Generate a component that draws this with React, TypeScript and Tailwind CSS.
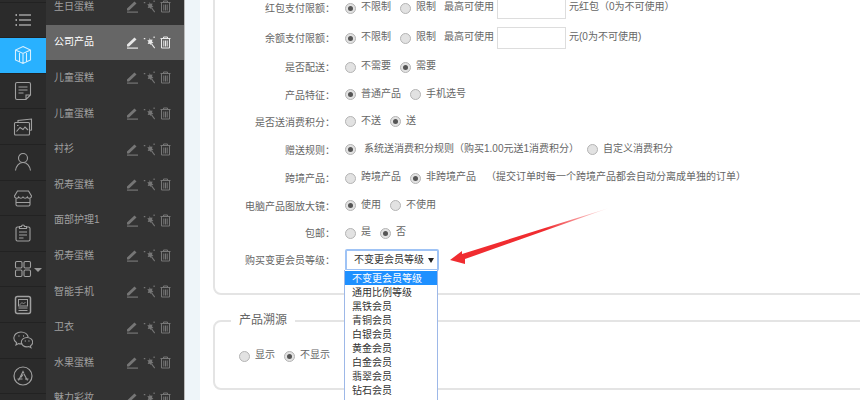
import React from "react";

const products = [
  "生日蛋糕",
  "公司产品",
  "儿童蛋糕",
  "儿童蛋糕",
  "衬衫",
  "祝寿蛋糕",
  "面部护理1",
  "祝寿蛋糕",
  "智能手机",
  "卫衣",
  "水果蛋糕",
  "魅力彩妆",
];

const railIcons: React.ReactNode[] = [
  <>
    <path d="M6 5h12M6 10h12M6 15h12" strokeWidth="1.5" />
    <path d="M2.5 5h1.5M2.5 10h1.5M2.5 15h1.5" strokeWidth="2" />
  </>,
  <path d="M10 1.5 17.5 5v10L10 18.5 2.5 15V5ZM2.5 5 10 8.5 17.5 5M10 8.5v10M6.5 6.8v10M13.5 6.8v10" />,
  <>
    <path d="M4 1.5h12a1.5 1.5 0 0 1 1.5 1.5v11l-4.5 4.5H4A1.5 1.5 0 0 1 2.500 17V3A1.500 1.500 0 0 1 4 1.500ZM17.500 14H13v4.500" />
    <path d="M5.500 6h9M5.500 9h9M5.500 12h5" />
  </>,
  <>
    <path d="M5 5.500V3.500L18.500 2v11l-2 .300" />
    <rect x="1.500" y="5.500" width="15" height="12.500" rx="1" />
    <path d="M3.500 14.500 7 10.500l3 2 2-2.500 3 3M4 8.500h1.500" />
  </>,
  <>
    <circle cx="10" cy="6" r="4.500" />
    <path d="M2.500 18.500c.5-4.500 3.500-8 7.500-8s7 3.500 7.500 8" />
  </>,
  <>
    <path d="M4.500 3h11l3 5a2.200 2.200 0 0 1-4.200 1 2.500 2.500 0 0 1-4.300 0 2.500 2.500 0 0 1-4.300 0A2.200 2.200 0 0 1 1.500 8Z" />
    <path d="M3 10.500v6A1.500 1.500 0 0 0 4.500 18h11a1.500 1.500 0 0 0 1.500-1.500v-6M3 14.500h14" />
  </>,
  <>
    <path d="M6.500 4H4.500A1.500 1.500 0 0 0 3 5.500v11A1.500 1.500 0 0 0 4.500 18h11a1.500 1.500 0 0 0 1.500-1.500v-11A1.500 1.500 0 0 0 15.500 4h-2" />
    <path d="M6.500 5.500V3.500h2a1.500 1.500 0 0 1 3 0h2v2ZM6 9h8M6 12h8M6 15h4.500" />
  </>,
  <>
    <rect x="2.500" y="2.500" width="6.500" height="6.500" rx="1.200" />
    <rect x="11" y="2.500" width="6.500" height="6.500" rx="1.200" />
    <rect x="2.500" y="11" width="6.500" height="6.500" rx="1.200" />
    <rect x="11" y="11" width="6.500" height="6.500" rx="1.200" />
  </>,
  <>
    <rect x="2.500" y="1.500" width="15" height="17" rx="2" strokeWidth="1.500" />
    <rect x="5.500" y="4.500" width="9" height="6.500" strokeWidth="1" />
    <path d="M6.500 10 9 7.500l1.500 1.500 2-2" strokeWidth="0.800" />
    <path d="M5.500 13h9M5.500 15.500h9" strokeWidth="1.200" />
  </>,
  <>
    <path d="M8 2C4 2 .8 4.600.8 8c0 2 1.100 3.600 2.800 4.700L3 15l2.600-1.400c.8.200 1.600.300 2.400.300 .5 0 1 0 1.400-.1" />
    <path d="M15.200 7.200C14.600 4.200 11.600 2 8 2" />
    <path d="M14 7.500c-3.200 0-5.700 2.100-5.700 4.700s2.500 4.700 5.700 4.700c.7 0 1.300-.1 1.900-.3l2 1.100-.5-1.800c1.400-.9 2.300-2.200 2.300-3.700 0-2.600-2.500-4.700-5.700-4.700Z" />
    <path d="M5.500 6h.9M10 6h.9M11.800 11h.9M15.500 11h.9" strokeWidth="1.500" />
  </>,
  <>
    <circle cx="10" cy="10" r="9" strokeWidth="1.200" />
    <path d="M5.500 14.500 10 5.500l1 2M14.500 14.500 11 8M8 11.500l2-3M4.500 13h5M12 13h3.500" strokeWidth="1.100" />
  </>,
];

const levels = ["不变更会员等级", "通用比例等级", "黑铁会员", "青铜会员", "白银会员", "黄金会员", "白金会员", "翡翠会员", "钻石会员"];

function RowIcons() {
  return (
    <span className="flex items-center gap-[4px]">
      <svg width="13" height="13" viewBox="0 0 13 13" fill="currentColor">
        <path d="M1 8.500 8.500 1.500l2 2L3 10.500H1Z" />
        <path d="M1 11.500h11v1.200H1Z" />
      </svg>
      <svg width="13" height="13" viewBox="0 0 13 13" fill="currentColor">
        <path d="m6.500 2 1 1.800 2-.4-.5 2 1.500 1.500-2 .4-.5 1.800-1.300-1.400-2 .2.800-1.800L4.300 4l2 .2Z" />
        <path d="m8 8 .8-.8 3.300 4.500-.8.800Z" />
        <path d="M.8 2h1.500v1.200H.8ZM10.500.5h1.200v1.500h-1.200Z" />
      </svg>
      <svg width="11" height="13" viewBox="0 0 11 13" fill="none" stroke="currentColor" strokeWidth="1">
        <path d="M.5 2.500h10M3.500 2.500V1h4v1.500M1.500 2.500v9.500h8V2.500M3.800 4.500v6M5.500 4.500v6M7.200 4.500v6" />
      </svg>
    </span>
  );
}

function Radio({ on, label, className, textClass }: { on?: boolean; label: string; className?: string; textClass?: string }) {
  return (
    <span className={"flex items-center " + (className ?? "mr-[9px]")}>
      <span className="flex h-[11px] w-[11px] items-center justify-center rounded-full border border-[#b4b4b4] bg-[#e2e2e2]">
        {on && <span className="h-[5px] w-[5px] rounded-full bg-[#555]" />}
      </span>
      <span className={"-translate-y-[1px] " + (textClass ?? "ml-[5px]")}>{label}</span>
    </span>
  );
}

function Row({ label, h, children }: { label: string; h: string; children: React.ReactNode }) {
  return (
    <div className={"flex items-center " + h}>
      <div className="w-[120px] text-right translate-y-[1px]">{label}：</div>
      <div className="ml-[10px] flex items-center whitespace-nowrap">{children}</div>
    </div>
  );
}

export default function App() {
  return (
    <div className="flex h-[400px] w-[860px] overflow-hidden bg-white font-['Liberation_Sans','Noto_Sans_CJK_SC',sans-serif] text-[10px] leading-[14px] text-[#666]">
      {/* icon rail */}
      <div className="w-[46px] shrink-0 -mt-[33px] bg-[#2b2b2b]">
        <div className="h-[35.6px] border-b border-[#222]" />
        {railIcons.map((icon, i) => (
          <div
            key={i}
            className={
              "relative flex h-[35.6px] items-center justify-center border-b border-[#222] " +
              (i === 1 ? "bg-[#29b1ff] text-[#d8f0ff]" : "text-[#a0a0a0]")
            }
          >
            <svg width="20" height="20" viewBox="0 0 20 20" fill="none" stroke="currentColor" strokeWidth="1.1">
              {icon}
            </svg>
            {i === 7 && <span className="absolute right-[4px] top-[16px] h-0 w-0 border-x-[4px] border-t-[4px] border-x-transparent border-t-[#999]" />}
          </div>
        ))}
      </div>

      {/* product list */}
      <div className="w-[138px] shrink-0 -mt-[11px] bg-[#333]">
        {products.map((name, i) => (
          <div
            key={i}
            className={
              "flex h-[35.6px] items-center pl-[8px] pr-[13px] " +
              (i === 1 ? "bg-[#666] text-white" : "text-[#a0a0a0]")
            }
          >
            <span className="flex-1">{name}</span>
            <span className={i === 1 ? "text-[#e8e8e8]" : "text-[#767676]"}>
              <RowIcons />
            </span>
          </div>
        ))}
      </div>
      <div className="w-[1px] shrink-0 bg-[#bbb]" />

      {/* gutter */}
      <div className="w-[15px] shrink-0 bg-[#eef5f9]" />

      {/* form */}
      <div className="relative flex-1 overflow-hidden pl-[13px]">
        <fieldset className="-mt-[40px] h-[335px] w-[700px] rounded-[8px] border-2 border-[#e4e4e4] pt-[31px]">
          <Row label="红包支付限额" h="h-[30px]">
            <Radio on label="不限制" />
            <Radio label="限制" />
            <span className="-ml-[1px] -translate-y-[1px]">最高可使用</span>
            <span className="ml-[3px] mr-[3px] h-[22px] w-[69px] border border-[#ddd]" />
            <span className="-translate-y-[1px]">元红包（0为不可使用）</span>
          </Row>
          <Row label="余额支付限额" h="h-[30px]">
            <Radio on label="不限制" />
            <Radio label="限制" />
            <span className="-ml-[1px] -translate-y-[1px]">最高可使用</span>
            <span className="ml-[3px] mr-[3px] h-[22px] w-[69px] border border-[#ddd]" />
            <span className="-translate-y-[1px]">元(0为不可使用)</span>
          </Row>
          <Row label="是否配送" h="h-[28px]">
            <Radio label="不需要" />
            <Radio on label="需要" />
          </Row>
          <Row label="产品特征" h="h-[27px]">
            <Radio on label="普通产品" />
            <Radio label="手机选号" />
          </Row>
          <Row label="是否送消费积分" h="h-[27px]">
            <Radio label="不送" />
            <Radio on label="送" />
          </Row>
          <Row label="赠送规则" h="h-[29px]">
            <Radio on className="mr-[8px]" textClass="ml-[8px]" label="系统送消费积分规则（购买1.00元送1消费积分）" />
            <Radio label="自定义消费积分" />
          </Row>
          <Row label="跨境产品" h="h-[28px]">
            <Radio label="跨境产品" />
            <Radio on label="非跨境产品" className="mr-[10px]" />
            <span className="-translate-y-[1px]">（提交订单时每一个跨境产品都会自动分离成单独的订单）</span>
          </Row>
          <Row label="电脑产品图放大镜" h="h-[27px]">
            <Radio on label="使用" />
            <Radio label="不使用" />
          </Row>
          <Row label="包邮" h="h-[28px]">
            <Radio label="是" />
            <Radio on label="否" />
          </Row>
          <Row label="购买变更会员等级" h="h-[26px]">
            <span className="flex h-[22px] w-[94px] items-center justify-between rounded-[2px] border-2 border-[#9fc3f5] pl-[7px] pr-[3px] text-[#333]">
              不变更会员等级
              <span className="h-0 w-0 border-x-[3px] border-t-[5px] border-x-transparent border-t-[#222]" />
            </span>
          </Row>
        </fieldset>

        <fieldset className="mt-[18px] h-[77px] w-[700px] rounded-[8px] border-2 border-[#e4e4e4] pl-[24px]">
          <legend className="-ml-[8px] -translate-y-[1px] px-[8px] text-[12px] leading-[16px]">产品溯源</legend>
          <div className="mt-[20px] flex items-center">
            <Radio label="显示" />
            <Radio on label="不显示" />
          </div>
        </fieldset>

        {/* open select list */}
        <div className="absolute left-[144px] top-[270px] h-[140px] w-[94px] border border-t-0 border-[#9db8e8] bg-white text-[#333]">
          <div className="pt-[1px]">
            {levels.map((l, i) => (
              <div key={l} className={"h-[14px] pl-[7px] leading-[16px] " + (i === 0 ? "bg-[#1e90ff] text-white" : "")}>
                {l}
              </div>
            ))}
          </div>
        </div>

        {/* red annotation arrow */}
        <svg className="absolute left-0 top-0" width="660" height="400" viewBox="201 0 660 400">
          <defs>
            <linearGradient id="fade" x1="452" y1="260" x2="610" y2="208" gradientUnits="userSpaceOnUse">
              <stop offset="0.6" stopColor="#f02c30" />
              <stop offset="1" stopColor="#f02c30" stopOpacity="0.05" />
            </linearGradient>
          </defs>
          <polygon points="451,260 463,251 463,254 610,208 466,259 466,264" fill="url(#fade)" />
        </svg>
      </div>
    </div>
  );
}
